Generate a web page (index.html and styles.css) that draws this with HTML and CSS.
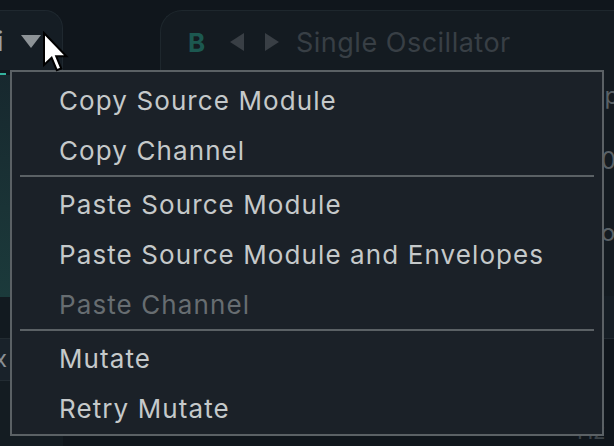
FILE: index.html
```html
<!DOCTYPE html>
<html>
<head>
<meta charset="utf-8">
<link rel="stylesheet" href="styles.css">
</head>
<body>
<div class="app">
  <div class="left">
    <div class="tab">
      <span class="tab-label">i</span>
      <span class="tab-arrow"></span>
    </div>
    <div class="accent"></div>
    <div class="teal"></div>
    <div class="dark"></div>
    <div class="slate"><span class="x">x</span></div>
    <div class="rest"></div>
  </div>
  <div class="right">
    <div class="panel">
      <div class="head">
        <span class="b">B</span>
        <span class="tri tri-l"></span>
        <span class="tri tri-r"></span>
        <span class="title">Single Oscillator</span>
      </div>
      <div class="row r1"><span class="peek">Type</span></div>
      <div class="row r2"><span class="peek">0</span></div>
      <div class="row r3"><span class="peek">o</span></div>
    </div>
    <div class="lower">
      <div class="band"></div>
      <div class="band2"><span class="hz">Hz</span></div>
    </div>
  </div>
</div>

<div class="menu">
  <div class="item">Copy Source Module</div>
  <div class="item">Copy Channel</div>
  <div class="sep"></div>
  <div class="item">Paste Source Module</div>
  <div class="item">Paste Source Module and Envelopes</div>
  <div class="item disabled">Paste Channel</div>
  <div class="sep"></div>
  <div class="item">Mutate</div>
  <div class="item">Retry Mutate</div>
</div>

<svg class="cursor" width="28" height="44" viewBox="0 0 14 22">
  <path d="M1 1 L1 17 L4.8 13.4 L7.4 19.6 L9.6 18.7 L7.1 12.6 L12.2 12.6 Z" fill="#ffffff" stroke="#000000" stroke-width="1" stroke-linejoin="miter"/>
</svg>
</body>
</html>
```
FILE: styles.css
```css
html, body {
  margin: 0;
  padding: 0;
}
body {
  width: 614px;
  height: 446px;
  overflow: hidden;
  background: #10161c;
  font-family: Inter, "Noto Sans", "Liberation Sans", sans-serif;
  position: relative;
  -webkit-font-smoothing: antialiased;
}
.app {
  display: flex;
  height: 446px;
}
.left {
  flex: none;
  width: 63px;
  display: flex;
  flex-direction: column;
}
.tab {
  margin-top: 10px;
  height: 60px;
  box-sizing: border-box;
  background: #151d24;
  border-top: 1px solid #1f282f;
  border-right: 1px solid #1f282f;
  border-radius: 0 18px 0 0;
  display: flex;
  align-items: center;
  padding-top: 2px;
}
.tab-label {
  margin-left: -3px;
  font-size: 27px;
  color: #9aa0a4;
  line-height: 1;
}
.tab-arrow {
  margin-left: 17px;
  width: 0;
  height: 0;
  border-left: 10px solid transparent;
  border-right: 10px solid transparent;
  border-top: 13px solid #8d9397;
}
.accent {
  margin-top: 3px;
  width: 6px;
  height: 2px;
  background: #33b29d;
}
.teal {
  height: 222px;
  background: linear-gradient(180deg, #17282e 0%, #1a3336 60%, #1b3a3b 100%);
}
.dark {
  height: 41px;
  background: #121a20;
  border-bottom: 1px solid #222b31;
}
.slate {
  height: 41px;
  background: #19222a;
  border-bottom: 1px solid #232c33;
}
.x {
  display: block;
  margin-left: -6px;
  padding-top: 8px;
  font-size: 24px;
  color: #8a9095;
  line-height: 1;
}
.rest {
  flex: 1;
  background: #141c22;
}
.right {
  margin-left: 97px;
  flex: 1;
  min-width: 0;
  display: flex;
  flex-direction: column;
  overflow: hidden;
}
.panel {
  margin-top: 10px;
  height: 286px;
  background: #141b21;
  border-top: 1px solid #1e272d;
  border-left: 1px solid #1e272d;
  border-radius: 22px 0 0 0;
  box-sizing: border-box;
}
.head {
  height: 60px;
  display: flex;
  align-items: center;
  padding-left: 27px;
  padding-top: 2px;
  box-sizing: border-box;
}
.b {
  font-size: 26px;
  font-weight: 700;
  color: #1c5850;
  width: 42px;
  flex: none;
}
.tri {
  flex: none;
  width: 0;
  height: 0;
  border-top: 9px solid transparent;
  border-bottom: 9px solid transparent;
}
.tri-l {
  border-right: 14px solid #393f45;
}
.tri-r {
  margin-left: 21px;
  border-left: 14px solid #393f45;
}
.title {
  margin-left: 17px;
  font-size: 27px;
  letter-spacing: 0.5px;
  color: #383f45;
  white-space: nowrap;
}
.row {
  display: flex;
  align-items: center;
  white-space: nowrap;
  font-size: 24px;
  color: #596065;
}
.r1 { height: 50px; padding-left: 416px; }
.r2 { height: 80px; padding-left: 440px; }
.r3 { height: 64px; padding-left: 440px; }
.peek {
  line-height: 1;
}
.lower {
  flex: 1;
  display: flex;
  flex-direction: column;
}
.band {
  height: 42px;
  background: #161e25;
  border-bottom: 1px solid #222a31;
}
.band2 {
  flex: 1;
  display: flex;
  align-items: flex-end;
  padding-left: 417px;
  padding-bottom: 2px;
  font-size: 22px;
  color: #3c4348;
  white-space: nowrap;
}
.menu {
  position: absolute;
  left: 10px;
  top: 70px;
  width: 594px;
  height: 366px;
  box-sizing: border-box;
  background: #1b2128;
  border: 2px solid #5b6165;
  padding: 3px 0 1px 0;
  display: flex;
  flex-direction: column;
}
.item {
  height: 50px;
  display: flex;
  align-items: center;
  padding-left: 47px;
  font-size: 26px;
  letter-spacing: 1.1px;
  color: #c5c9ca;
  white-space: nowrap;
}
.item.disabled {
  color: #676d71;
}
.sep {
  height: 4px;
  margin: 0 8px;
  box-sizing: border-box;
  border-top: 2px solid #5b6165;
}
.cursor {
  position: absolute;
  left: 42px;
  top: 31px;
}
```
